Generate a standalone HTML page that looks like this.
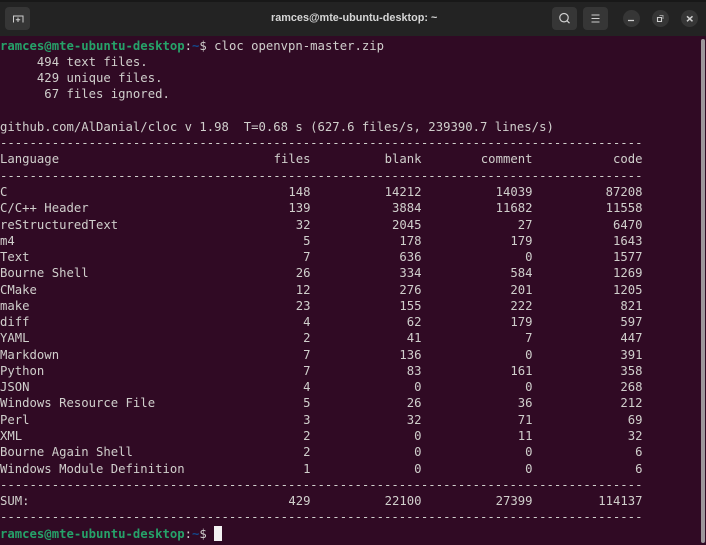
<!DOCTYPE html>
<html><head><meta charset="utf-8"><style>
html,body{margin:0;padding:0;background:#300a24;overflow:hidden;width:706px;height:545px}
body{position:relative}
#tb{position:absolute;left:0;top:0;width:706px;height:36px;background:#232323;border-top:2px solid #181818;box-sizing:border-box}
.btn{position:absolute;top:7px;width:25px;height:23px;background:#363636;border-radius:4px}
.cb{position:absolute;top:10px;width:17px;height:17px;border-radius:50%;background:#363636}
#title{position:absolute;left:271px;top:11px;font:bold 10.85px/15px "Liberation Sans",sans-serif;color:#d6d6d6;white-space:pre}
svg{position:absolute;left:0;top:0}
#t{position:absolute;left:0;top:37.6px;width:700px;font:12.27px/16.27px "DejaVu Sans Mono","Liberation Mono",monospace;color:#d0cfcc}
#t div{height:16.27px;position:relative;white-space:pre}
.g{color:#26a269;font-weight:bold}.u{color:#12488b;font-weight:bold}
.r i{font-weight:normal;font-style:normal;position:absolute;top:0;text-align:right;width:80px}
.r i:nth-of-type(1){left:230.5px}
.r i:nth-of-type(2){left:341.5px}
.r i:nth-of-type(3){left:452.5px}
.r i:nth-of-type(4){left:562.5px}
#cur{position:absolute;left:214px;top:526px;width:8px;height:15px;background:#f2f2f2}
#sb{position:absolute;left:700.5px;top:39px;width:4.5px;height:504px;background:#9d969b;border-radius:2px}
</style></head><body>
<div id="tb"></div>
<div class="btn" style="left:5px"></div>
<div class="btn" style="left:552px"></div>
<div class="btn" style="left:583px"></div>
<div class="cb" style="left:623px"></div>
<div class="cb" style="left:652px"></div>
<div class="cb" style="left:681px"></div>
<div id="title">ramces@mte-ubuntu-desktop: ~</div>
<svg width="706" height="36" viewBox="0 0 706 36" fill="none" stroke="#cfcfcf" stroke-width="1">
<path d="M13.5 22.5V16H23V22.5"/><path d="M18 17.5V22M15.8 19.7H20.2"/>
<circle cx="564" cy="17.7" r="4.2" stroke-width="1.2"/><path d="M567 20.7L569.5 23.2" stroke-width="1.2"/>
<path d="M591.5 15H599.5M591.5 18.5H599.5M591.5 22H599.5"/>
<path d="M628 20.5H634" stroke-width="1.3"/>
<path d="M657.5 17.5H661.5V21.5H657.5Z" stroke-width="1.1"/><path d="M659.5 15.5H663V19" stroke="#999"/>
<path d="M687 16.3L692.5 21.3M692.5 16.3L687 21.3" stroke-width="1.5"/>
</svg>
<div id="t"><div><span class="g">ramces@mte-ubuntu-desktop</span>:<span class="u">~</span>$ cloc openvpn-master.zip</div>
<div>     494 text files.</div>
<div>     429 unique files.</div>
<div>      67 files ignored.</div>
<div></div>
<div>github.com/AlDanial/cloc v 1.98  T=0.68 s (627.6 files/s, 239390.7 lines/s)</div>
<div>---------------------------------------------------------------------------------------</div>
<div class="r">Language<i>files</i><i>blank</i><i>comment</i><i>code</i></div>
<div>---------------------------------------------------------------------------------------</div>
<div class="r">C<i>148</i><i>14212</i><i>14039</i><i>87208</i></div>
<div class="r">C/C++ Header<i>139</i><i>3884</i><i>11682</i><i>11558</i></div>
<div class="r">reStructuredText<i>32</i><i>2045</i><i>27</i><i>6470</i></div>
<div class="r">m4<i>5</i><i>178</i><i>179</i><i>1643</i></div>
<div class="r">Text<i>7</i><i>636</i><i>0</i><i>1577</i></div>
<div class="r">Bourne Shell<i>26</i><i>334</i><i>584</i><i>1269</i></div>
<div class="r">CMake<i>12</i><i>276</i><i>201</i><i>1205</i></div>
<div class="r">make<i>23</i><i>155</i><i>222</i><i>821</i></div>
<div class="r">diff<i>4</i><i>62</i><i>179</i><i>597</i></div>
<div class="r">YAML<i>2</i><i>41</i><i>7</i><i>447</i></div>
<div class="r">Markdown<i>7</i><i>136</i><i>0</i><i>391</i></div>
<div class="r">Python<i>7</i><i>83</i><i>161</i><i>358</i></div>
<div class="r">JSON<i>4</i><i>0</i><i>0</i><i>268</i></div>
<div class="r">Windows Resource File<i>5</i><i>26</i><i>36</i><i>212</i></div>
<div class="r">Perl<i>3</i><i>32</i><i>71</i><i>69</i></div>
<div class="r">XML<i>2</i><i>0</i><i>11</i><i>32</i></div>
<div class="r">Bourne Again Shell<i>2</i><i>0</i><i>0</i><i>6</i></div>
<div class="r">Windows Module Definition<i>1</i><i>0</i><i>0</i><i>6</i></div>
<div>---------------------------------------------------------------------------------------</div>
<div class="r">SUM:<i>429</i><i>22100</i><i>27399</i><i>114137</i></div>
<div>---------------------------------------------------------------------------------------</div>
<div><span class="g">ramces@mte-ubuntu-desktop</span>:<span class="u">~</span>$</div></div>
<div id="cur"></div>
<div id="sb"></div>
</body></html>
